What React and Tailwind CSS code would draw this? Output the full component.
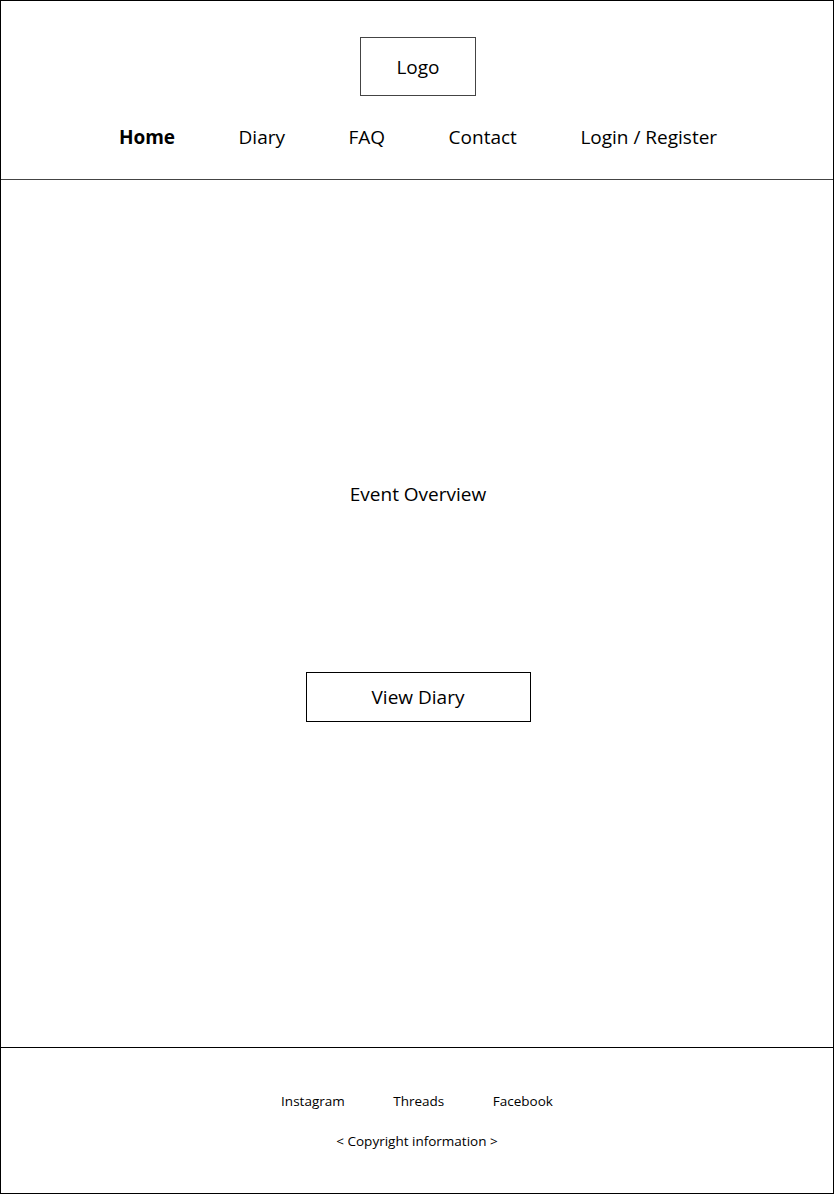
export default function App() {
  return (
    <div className="w-[834px] h-[1194px] border border-black flex flex-col bg-white text-black font-['Open_Sans',sans-serif]">
      <header className="h-[179px] shrink-0 border-b border-[#444] flex flex-col items-center pt-[36px] pl-[2px]">
        <div className="w-[116px] h-[59px] border border-[#444] flex items-center justify-center text-[19px] pt-[2px]">
          Logo
        </div>
        <nav className="mt-[27px] flex items-center gap-[63.5px] text-[19px] leading-[28px]">
          <a className="font-bold">Home</a>
          <a>Diary</a>
          <a>FAQ</a>
          <a>Contact</a>
          <a>Login / Register</a>
        </nav>
      </header>
      <main className="flex-1 flex flex-col items-center pt-[300px] pl-[2px]">
        <h1 className="text-[19px] leading-[28px]">Event Overview</h1>
        <button className="mt-[164px] w-[225px] h-[50px] border border-black flex items-center justify-center text-[19px]">
          View Diary
        </button>
      </main>
      <footer className="h-[146px] shrink-0 border-t border-black flex flex-col items-center pt-[43px]">
        <div className="flex items-center gap-[48.5px] text-[13.5px] leading-[20px]">
          <a>Instagram</a>
          <a>Threads</a>
          <a>Facebook</a>
        </div>
        <p className="mt-[20px] text-[13.5px] leading-[20px]">&lt; Copyright information &gt;</p>
      </footer>
    </div>
  );
}
